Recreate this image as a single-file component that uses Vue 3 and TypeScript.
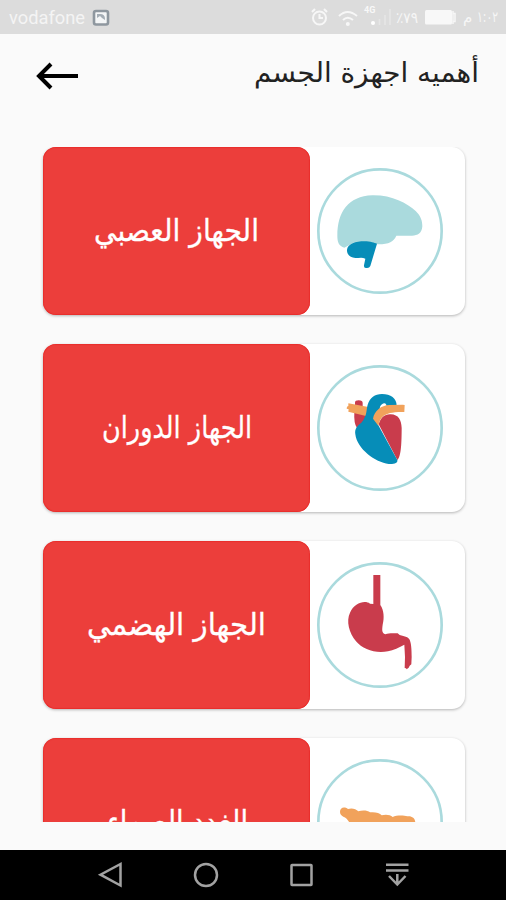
<script setup lang="ts">
interface Shape {
  d: string
  fill: string
}
interface System {
  title: string
  x: number
  width: number
  viewBox: string
  cx: number
  cy: number
  shapes: Shape[]
}

const systems: System[] = [
  {
    title: 'الجهاز العصبي',
    x: 51,
    width: 165,
    viewBox: '22 83 378 378',
    cx: 211,
    cy: 272,
    shapes: [
      {
        fill: '#aadadd',
        d: 'M104 322C88 317 83 306 83 286C83 216 115 168 188 165C247 164 291 188 318 212C334 227 338 243 338 258C337 278 324 286 307 286L260 286C253 303 237 312 207 312L132 307Z',
      },
      {
        fill: '#068db8',
        d: 'M112 329C113 310 139 303 164 303C183 303 194 308 202 310L182 377Q179 384 170 383Q162 384 163 375L167 355C158 350 148 353 137 353C121 352 111 342 112 329Z',
      },
    ],
  },
  {
    title: 'الجهاز الدوران',
    x: 59,
    width: 150,
    viewBox: '22 74 378 378',
    cx: 211,
    cy: 263,
    shapes: [
      { fill: '#c93c4c', d: 'M136 198V187Q136 180 147 180Q159 180 159 188V203ZM134 216L172 224L168 240L142 263Q132 250 134 216Z' },
      { fill: '#f1a25b', d: 'M116 189L176 200L172 228L116 214L117 207L111 205L112 199L116 197Z' },
      { fill: '#c93c4c', d: 'M207 252C213 231 225 221 243 222C267 223 275 239 276 263C276 302 275 350 263 359Z' },
      {
        fill: '#068db8',
        d: 'M164 233C172 219 170 206 174 193C181 172 195 161 217 161C243 161 261 174 261 196L230 202C234 185 218 184 211 199L204 251L263 359C265 368 254 372 237 371C197 366 142 326 137 282C134 263 145 255 155 247Q162 241 164 233Z',
      },
      { fill: '#f1a25b', d: 'M190 235C194 211 215 195 239 194L279 193L285 194L284 215C250 214 231 219 221 227C212 235 209 243 206 256Z' },
    ],
  },
  {
    title: 'الجهاز الهضمي',
    x: 44,
    width: 179,
    viewBox: '22 80 378 378',
    cx: 211,
    cy: 269,
    shapes: [
      {
        fill: '#c93c4c',
        d: 'M191 119H212V209C223 225 224 247 219 268C217 283 216 293 227 297C239 292 254 294 264 294L270 299C281 303 292 303 298 310C305 319 306 344 306 365L305 387L300 391L297 397L291 402L289 399L285 398L286 365L284 328C269 337 251 344 235 348C198 356 159 342 139 318C118 292 109 257 121 232C133 205 164 193 181 205L191 206Z',
      },
    ],
  },
  {
    title: 'الغدد الصماء',
    x: 64,
    width: 141,
    viewBox: '52 84 378 378',
    cx: 241,
    cy: 273,
    shapes: [
      {
        fill: '#f1a25b',
        d: 'M121 243C121 230 133 225 145 234C157 230 169 234 176 241C188 237 204 238 211 244C226 242 240 246 246 253C258 249 272 251 279 258C291 252 313 253 323 256C337 254 347 262 347 276L306 306H180L149 274C142 264 139 259 131 257C125 254 121 250 121 243Z',
      },
    ],
  },
]
</script>

<template>
  <main class="phone" dir="rtl">
    <header class="status" dir="ltr">
      <svg width="506" height="34" viewBox="0 0 506 34">
        <text class="carrier" x="9" y="23.500" textLength="76" lengthAdjust="spacingAndGlyphs">vodafone</text>
        <rect x="94" y="11" width="14" height="13.500" rx="2" fill="#f4f6f7" stroke="#8e979f" stroke-width="2.600" />
        <path d="M97 14H100Q105 14 105 19V20L102 18L100 16L97 18Z" fill="#a4adb5" />
        <g fill="none" stroke="#f7f7f7" stroke-width="2">
          <circle cx="319.500" cy="18" r="6.500" />
          <path d="M319.500 14V18H323M312 12L315 9M324 9L327 12" />
          <path d="M339 16Q347.500 8 357 16M343 20Q347.500 15.500 353 20" />
        </g>
        <circle cx="347.800" cy="24" r="2" fill="#f7f7f7" />
        <text class="network" x="364" y="13">4G</text>
        <circle cx="373" cy="23" r="2" fill="#fff" />
        <path d="M379.500 19V25M385 15V25M390 9V25" stroke="#e6e6e6" stroke-width="1.500" />
        <text class="level" x="396" y="23" textLength="22" lengthAdjust="spacingAndGlyphs">٪٧٩</text>
        <rect x="425" y="10" width="27" height="14.500" rx="1.500" fill="#f8f8f8" />
        <path d="M453 11V24M453 13.500H455V21.500H453" fill="none" stroke="#f6f6f6" stroke-width="1.500" />
        <text class="clock" x="463" y="22">م</text>
        <text class="clock" x="477" y="22" textLength="21" lengthAdjust="spacingAndGlyphs">١:٠٢</text>
      </svg>
    </header>

    <section class="titlebar">
      <h1>
        <svg width="230" height="50" viewBox="0 0 230 50" direction="ltr">
          <text class="heading" x="4" y="31.500" textLength="225" lengthAdjust="spacingAndGlyphs">أهميه اجهزة الجسم</text>
        </svg>
      </h1>
      <button class="back" type="button">
        <svg width="44" height="30" viewBox="0 0 44 30">
          <path d="M17 3L5 15L17 27M6 15H44" fill="none" stroke="#000" stroke-width="4" />
        </svg>
      </button>
    </section>

    <section class="list">
      <article v-for="item in systems" :key="item.title" class="card">
        <div class="picture">
          <svg width="126" height="126" :viewBox="item.viewBox">
            <circle :cx="item.cx" :cy="item.cy" r="185" fill="none" stroke="#aadadd" stroke-width="8" />
            <path v-for="(shape, i) in item.shapes" :key="i" :d="shape.d" :fill="shape.fill" />
          </svg>
        </div>
        <h2>
          <svg width="267" height="168" viewBox="0 0 267 168" direction="ltr">
            <text class="label" :x="item.x" y="93.500" :textLength="item.width" lengthAdjust="spacingAndGlyphs">{{ item.title }}</text>
          </svg>
        </h2>
      </article>
    </section>

    <nav class="navbar" dir="ltr">
      <svg width="28" height="28" viewBox="0 0 28 28"><path d="M24.500 3V24.500L4.500 13.700Z" /></svg>
      <svg width="28" height="28" viewBox="0 0 28 28"><circle cx="14" cy="14" r="11" /></svg>
      <svg width="28" height="28" viewBox="0 0 28 28"><rect x="3.500" y="4" width="20" height="20" rx="0.500" /></svg>
      <svg width="28" height="28" viewBox="0 0 28 28"><path d="M2 3.800H24.500M2 9.500H24.500M13.300 13V24M5 15L13.300 23.500L21.500 15" /></svg>
    </nav>
  </main>
</template>

<style>
body {
  margin: 0;
  background: #fafafa;
}
</style>

<style scoped>
.phone {
  display: flex;
  flex-direction: column;
  width: 506px;
  height: 900px;
  overflow: hidden;
  background: #fafafa;
  font-family: "DejaVu Sans", sans-serif;
}
svg {
  display: block;
}
.status {
  flex: none;
  height: 34px;
  background: #dcdcdc;
}
.carrier {
  font-family: Roboto, sans-serif;
  font-size: 18px;
  fill: #f4f4f4;
}
.network {
  font-family: Roboto, sans-serif;
  font-weight: 700;
  font-size: 9px;
  fill: #f8f8f8;
}
.level,
.clock {
  font-size: 15px;
  fill: #f6f6f6;
}
.titlebar {
  display: flex;
  flex: none;
  justify-content: space-between;
  align-items: flex-start;
  height: 113px;
  padding: 16px 26px 0 34px;
  box-sizing: border-box;
}
h1,
h2 {
  margin: 0;
  font-weight: 400;
}
.heading {
  font-size: 27px;
  fill: #222;
}
.back {
  margin-top: 11px;
  padding: 0;
  border: 0;
  background: none;
}
.list {
  display: flex;
  flex: none;
  flex-direction: column;
  gap: 29px;
  height: 675px;
  padding: 0 41px 0 43px;
  overflow: hidden;
}
.card {
  display: flex;
  flex: none;
  height: 168px;
  border-radius: 13px;
  background: #fff;
  box-shadow: 0 1px 3px rgba(0, 0, 0, 0.28);
}
.picture {
  display: grid;
  flex: 1;
  place-items: center;
  padding-left: 7px;
  padding-right: 22px;
}
h2 {
  width: 267px;
  border-radius: 13px;
  background: #ec3e3b;
  box-shadow: inset 0 0 1px 0.5px #e5201f;
}
.label {
  font-size: 30.5px;
  fill: #fff;
  stroke: #fff;
  stroke-width: 0.3;
}
.navbar {
  display: flex;
  flex: none;
  align-items: center;
  gap: 68px;
  height: 50px;
  margin-top: 28px;
  padding-left: 96px;
  background: #000;
}
.navbar path,
.navbar circle,
.navbar rect {
  fill: none;
  stroke: #a2a2a2;
  stroke-width: 2.5;
}
</style>
